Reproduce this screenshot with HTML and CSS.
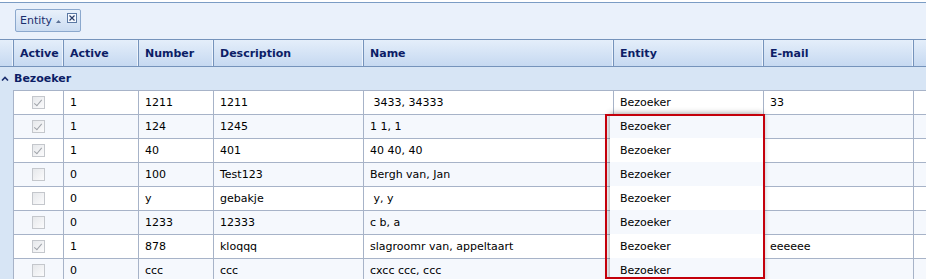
FILE: index.html
```html
<!doctype html>
<html lang="en">
  <head>
    <meta charset="UTF-8" />
    <title>Grid - grouped by Entity</title>
    <link rel="stylesheet" href="styles.css">
  </head>
  <body>
    <div class="grid">
      <!-- Group panel -->
      <div class="group-panel">
        <div class="group-chip">
          <span class="chip-label">Entity</span>
          <svg class="chip-sort" width="5" height="3" viewBox="0 0 5 3"><path d="M0 3 L2.5 0 L5 3 Z" fill="#5a6f94"/></svg>
          <span class="chip-close">
            <svg width="8" height="8" viewBox="0 0 8 8"><path d="M1.5 1.5 L6.5 6.5 M6.5 1.5 L1.5 6.5" stroke="#2c3f6a" stroke-width="1.2"/></svg>
          </span>
        </div>
      </div>

      <!-- Header -->
      <div class="row head">
        <div class="cell indent"></div>
        <div class="cell">Active</div>
        <div class="cell">Active</div>
        <div class="cell">Number</div>
        <div class="cell">Description</div>
        <div class="cell">Name</div>
        <div class="cell">Entity</div>
        <div class="cell">E-mail</div>
        <div class="cell"></div>
      </div>

      <!-- Group -->
      <div class="group-row">
        <svg class="group-caret" width="8" height="5" viewBox="0 0 8 5"><path d="M1 4.5 L4 1.5 L7 4.5" fill="none" stroke="#1b2f6e" stroke-width="1.6"/></svg>
        <span>Bezoeker</span>
      </div>

      <div class="row data">
        <div class="cell indent"></div>
        <div class="cell check"><span class="cb on"></span></div>
        <div class="cell">1</div>
        <div class="cell">1211</div>
        <div class="cell">1211</div>
        <div class="cell"> 3433, 34333</div>
        <div class="cell">Bezoeker</div>
        <div class="cell">33</div>
        <div class="cell"></div>
      </div>
      <div class="row data alt">
        <div class="cell indent"></div>
        <div class="cell check"><span class="cb on"></span></div>
        <div class="cell">1</div>
        <div class="cell">124</div>
        <div class="cell">1245</div>
        <div class="cell">1 1, 1</div>
        <div class="cell">Bezoeker</div>
        <div class="cell"></div>
        <div class="cell"></div>
      </div>
      <div class="row data">
        <div class="cell indent"></div>
        <div class="cell check"><span class="cb on"></span></div>
        <div class="cell">1</div>
        <div class="cell">40</div>
        <div class="cell">401</div>
        <div class="cell">40 40, 40</div>
        <div class="cell">Bezoeker</div>
        <div class="cell"></div>
        <div class="cell"></div>
      </div>
      <div class="row data alt">
        <div class="cell indent"></div>
        <div class="cell check"><span class="cb"></span></div>
        <div class="cell">0</div>
        <div class="cell">100</div>
        <div class="cell">Test123</div>
        <div class="cell">Bergh van, Jan</div>
        <div class="cell">Bezoeker</div>
        <div class="cell"></div>
        <div class="cell"></div>
      </div>
      <div class="row data">
        <div class="cell indent"></div>
        <div class="cell check"><span class="cb"></span></div>
        <div class="cell">0</div>
        <div class="cell">y</div>
        <div class="cell">gebakje</div>
        <div class="cell"> y, y</div>
        <div class="cell">Bezoeker</div>
        <div class="cell"></div>
        <div class="cell"></div>
      </div>
      <div class="row data alt">
        <div class="cell indent"></div>
        <div class="cell check"><span class="cb"></span></div>
        <div class="cell">0</div>
        <div class="cell">1233</div>
        <div class="cell">12333</div>
        <div class="cell">c b, a</div>
        <div class="cell">Bezoeker</div>
        <div class="cell"></div>
        <div class="cell"></div>
      </div>
      <div class="row data">
        <div class="cell indent"></div>
        <div class="cell check"><span class="cb on"></span></div>
        <div class="cell">1</div>
        <div class="cell">878</div>
        <div class="cell">kloqqq</div>
        <div class="cell">slagroomr van, appeltaart</div>
        <div class="cell">Bezoeker</div>
        <div class="cell">eeeeee</div>
        <div class="cell"></div>
      </div>
      <div class="row data alt">
        <div class="cell indent"></div>
        <div class="cell check"><span class="cb"></span></div>
        <div class="cell">0</div>
        <div class="cell">ccc</div>
        <div class="cell">ccc</div>
        <div class="cell">cxcc ccc, ccc</div>
        <div class="cell">Bezoeker</div>
        <div class="cell"></div>
        <div class="cell"></div>
      </div>

      <!-- Column being dragged -->
      <div class="drag-col">
        <div class="drag-cell alt">Bezoeker</div>
        <div class="drag-cell">Bezoeker</div>
        <div class="drag-cell alt">Bezoeker</div>
        <div class="drag-cell">Bezoeker</div>
        <div class="drag-cell alt">Bezoeker</div>
        <div class="drag-cell">Bezoeker</div>
        <div class="drag-cell alt">Bezoeker</div>
      </div>

      <!-- Annotation -->
      <div class="annot"></div>
    </div>
  </body>
</html>
```

FILE: styles.css
```css
* {
  box-sizing: border-box;
}

html, body {
  margin: 0;
  padding: 0;
  background: #ffffff;
}

.grid {
  position: relative;
  height: 279px;
  overflow: hidden;
  font-family: "DejaVu Sans", Verdana, sans-serif;
  font-size: 11px;
  color: #000000;
  background: #ffffff;
}

/* Group panel */
.group-panel {
  margin-top: 2px;
  height: 37px;
  border-top: 1px solid #7b9cc4;
  background: #eaf1fb;
  padding: 6px 0 0 15px;
}

.group-chip {
  display: inline-flex;
  align-items: center;
  height: 23px;
  width: 66px;
  padding-left: 4px;
  border: 1px solid #8ba8cd;
  border-radius: 2px;
  background: linear-gradient(to bottom, #e9f1fb, #cbdcf1);
  color: #1b2f6e;
}

.chip-label {
  margin-top: -1px;
}

.chip-sort {
  margin: 2px 0 0 4px;
}

.chip-close {
  display: flex;
  align-items: center;
  justify-content: center;
  width: 10px;
  height: 10px;
  margin: -6px 0 0 6px;
  border: 1px solid #5a78a3;
  background: #f7faff;
}

/* Rows */
.row {
  display: grid;
  grid-template-columns: 13px 50px 75px 75px 150px 250px 150px 150px 1fr;
}

.cell {
  border-left: 1px solid #a7b3c8;
  padding: 0 6px;
  white-space: pre;
  overflow: hidden;
}

.cell.indent {
  border-left: 0;
  padding: 0;
}

.head {
  height: 28px;
  border-top: 1px solid #7593bb;
  border-bottom: 1px solid #7593bb;
  background: linear-gradient(to bottom, #e4eefa, #c6d9f1);
  color: #0c1d66;
  font-weight: bold;
}

.head .cell {
  display: flex;
  align-items: center;
  border-left: 1px solid #7593bb;
  border-right: 1px solid #eef4fc;
}

.head .cell.indent {
  border-left: 0;
}

.group-row {
  display: flex;
  align-items: center;
  height: 23px;
  background: #d7e5f5;
  color: #0c1d66;
  font-weight: bold;
}

.group-caret {
  margin: 0 5px 0 1px;
}

.data {
  height: 24px;
}

.data .cell {
  display: flex;
  align-items: center;
  border-top: 1px solid #a7b3c8;
}

.data .cell.indent {
  border-top: 0;
  background: #d7e5f5;
}

.data.alt .cell:not(.indent) {
  background: #f5f8fd;
}

/* Disabled checkbox */
.data .cell.check {
  justify-content: center;
  padding: 0;
}

.cb {
  position: relative;
  width: 13px;
  height: 13px;
  border: 1px solid #c4c7cc;
  background: linear-gradient(to bottom right, #e6e8eb, #fbfbfc);
}

.cb.on::after {
  content: "";
  position: absolute;
  left: 3px;
  top: 1px;
  width: 3px;
  height: 7px;
  border-right: 1px solid #9fa3a9;
  border-bottom: 1px solid #9fa3a9;
  transform: rotate(40deg);
}

/* Dragged column */
.drag-col {
  position: absolute;
  left: 610px;
  top: 114px;
  width: 153px;
  height: 170px;
  background: #ffffff;
  box-shadow: 0 0 6px rgba(0, 0, 0, 0.45);
}

.drag-cell {
  height: 24px;
  padding-left: 10px;
  display: flex;
  align-items: center;
}

.drag-cell.alt {
  background: #f5f8fd;
}

/* Red annotation box */
.annot {
  position: absolute;
  left: 605px;
  top: 114px;
  width: 160px;
  height: 165px;
  border: 2px solid #c4000b;
}
```
